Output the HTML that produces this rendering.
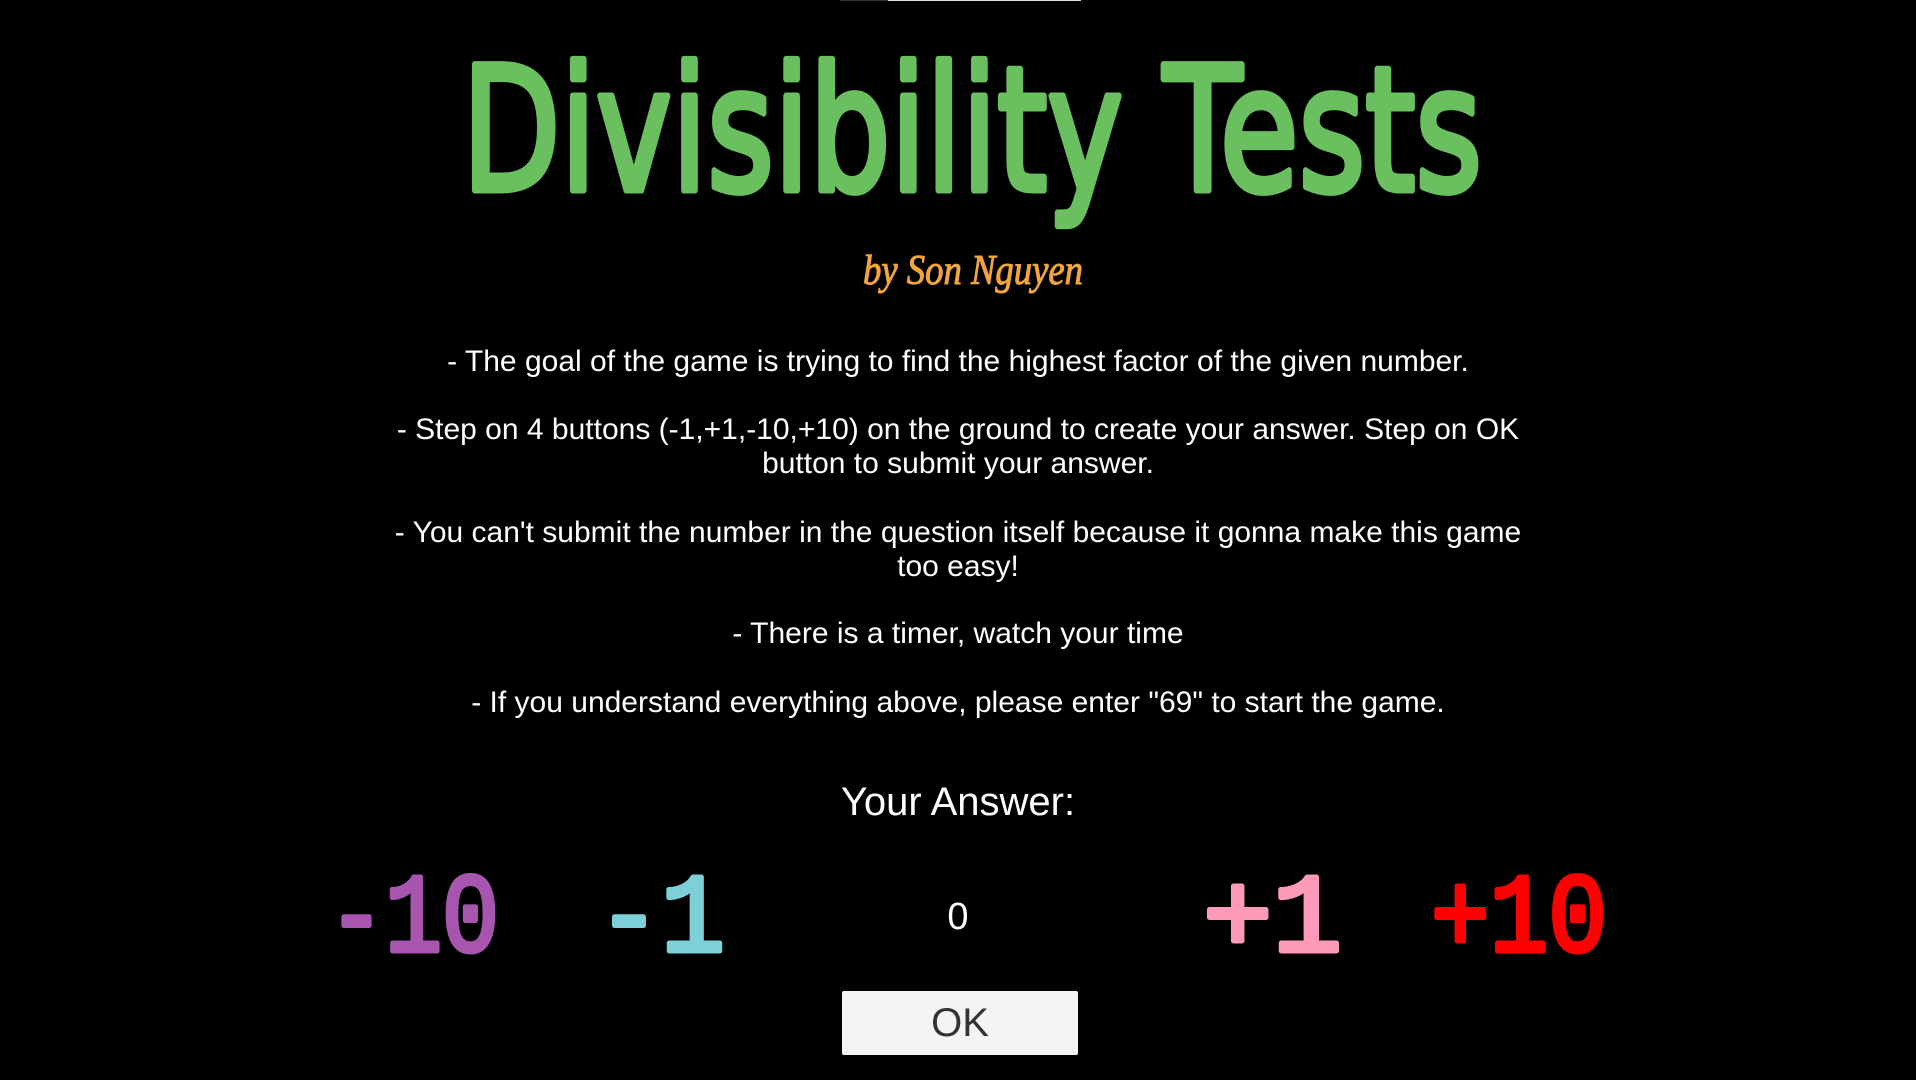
<!DOCTYPE html>
<html><head><meta charset="utf-8"><style>
html,body{margin:0;padding:0;background:#000;width:1916px;height:1080px;overflow:hidden;position:relative;font-family:"Liberation Sans",sans-serif;color:#fff}
.l{position:absolute;left:0;width:1916px;text-align:center;font-size:30px;line-height:34px;white-space:nowrap}
svg{position:absolute;left:0;top:0}
</style></head><body>
<div style="position:absolute;left:840px;top:0;width:48px;height:1px;background:#333"></div>
<div style="position:absolute;left:888px;top:0;width:193px;height:1px;background:#ddd"></div>
<svg width="1916" height="1080">
<text x="462" y="190" textLength="1020" lengthAdjust="spacingAndGlyphs" font-family="DejaVu Sans, sans-serif" font-size="172" fill="#6abf5f" stroke="#6abf5f" stroke-width="7" stroke-linejoin="round">Divisibility Tests</text>
<text x="863" y="284" textLength="220" lengthAdjust="spacingAndGlyphs" font-family="Liberation Serif, serif" font-style="italic" font-size="42" fill="#f2a53a" stroke="#f2a53a" stroke-width="1">by Son Nguyen</text>
<g font-family="Liberation Mono, monospace" font-size="112" stroke-width="5" stroke-linejoin="round">
<text x="328" y="951" textLength="171" lengthAdjust="spacingAndGlyphs" fill="#a855b0" stroke="#a855b0">-10</text>
<text x="597" y="951" textLength="128" lengthAdjust="spacingAndGlyphs" fill="#7ed0d8" stroke="#7ed0d8">-1</text>
<text x="1203" y="951" textLength="139" lengthAdjust="spacingAndGlyphs" fill="#ff9bb8" stroke="#ff9bb8">+1</text>
<text x="1431" y="951" textLength="176" lengthAdjust="spacingAndGlyphs" fill="#ff0000" stroke="#ff0000">+10</text>
</g>
</svg>
<div class="l" style="top:345px">- The goal of the game is trying to find the highest factor of the given number.</div>
<div class="l" style="top:413px">- Step on 4 buttons (-1,+1,-10,+10) on the ground to create your answer. Step on OK</div>
<div class="l" style="top:447px">button to submit your answer.</div>
<div class="l" style="top:516px">- You can't submit the number in the question itself because it gonna make this game</div>
<div class="l" style="top:550px">too easy!</div>
<div class="l" style="top:617px">- There is a timer, watch your time</div>
<div class="l" style="top:686px">- If you understand everything above, please enter "69" to start the game.</div>
<div class="l" style="top:778px;font-size:40px;line-height:48px">Your Answer:</div>
<div class="l" style="top:895px;font-size:38px;line-height:44px">0</div>
<div style="position:absolute;left:842px;top:991px;width:236px;height:64px;background:#f4f4f4;border-radius:2px;color:#333;font-size:40px;line-height:64px;text-align:center">OK</div>
</body></html>
